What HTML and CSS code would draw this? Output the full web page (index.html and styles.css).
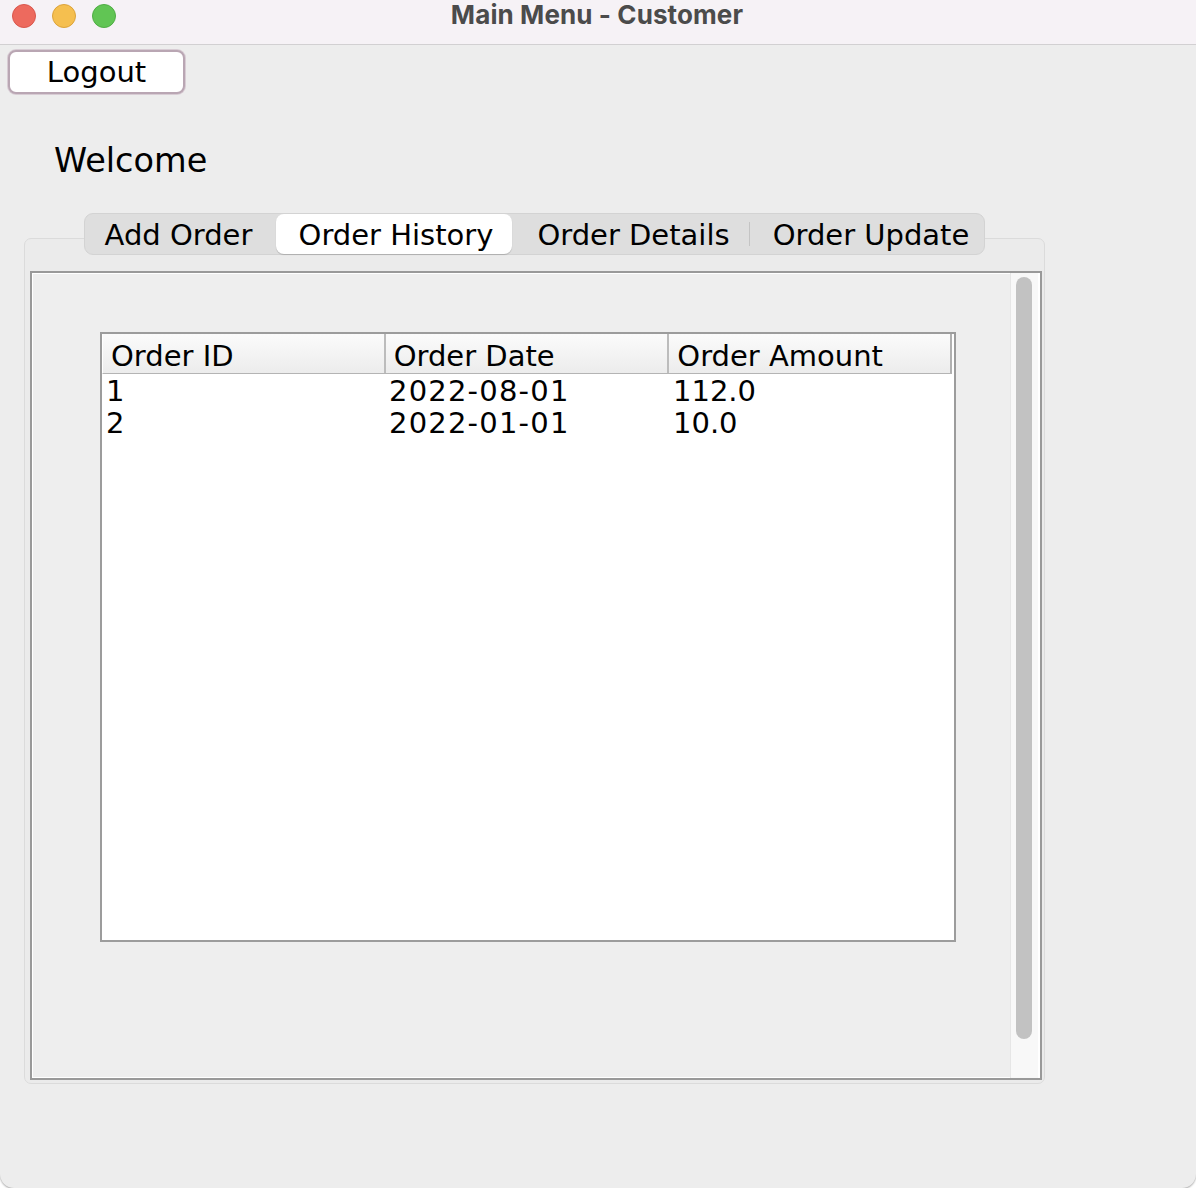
FILE: index.html
```html
<!DOCTYPE html>
<html>
<head>
<meta charset="utf-8">
<link rel="stylesheet" href="styles.css">
</head>
<body>
<div class="window">
  <div class="titlebar">
    <div class="lights">
      <span class="light red"></span>
      <span class="light yellow"></span>
      <span class="light green"></span>
    </div>
    <div class="title">Main Menu - Customer</div>
  </div>
  <div class="content">
    <button class="logout">Logout</button>
    <div class="welcome">Welcome</div>
    <div class="tabs">
      <div class="tab t1">Add Order</div>
      <div class="tab t2 active">Order History</div>
      <div class="tab t3">Order Details</div>
      <div class="sep"></div>
      <div class="tab t4">Order Update</div>
    </div>
    <div class="panel">
      <div class="scrollpane">
        <div class="viewport">
          <div class="table">
            <div class="thead">
              <div class="th c1">Order ID</div>
              <div class="th c2">Order Date</div>
              <div class="th c3">Order Amount</div>
            </div>
            <div class="rows">
              <div class="row">
                <div class="td c1">1</div>
                <div class="td c2 date">2022-08-01</div>
                <div class="td c3">112.0</div>
              </div>
              <div class="row">
                <div class="td c1">2</div>
                <div class="td c2 date">2022-01-01</div>
                <div class="td c3">10.0</div>
              </div>
            </div>
          </div>
        </div>
        <div class="scrollbar"><div class="thumb"></div></div>
      </div>
    </div>
  </div>
</div>
</body>
</html>
```
FILE: styles.css
```css
html, body {
  margin: 0;
  padding: 0;
  background: #ffffff;
}
body {
  width: 1196px;
  height: 1188px;
  overflow: hidden;
  font-family: "DejaVu Sans", "Liberation Sans", sans-serif;
}
.window {
  width: 1196px;
  height: 1188px;
  background: #ededed;
  border-radius: 0 0 14px 14px;
  box-shadow: 0 1px 2px rgba(0,0,0,0.35);
  display: flex;
  flex-direction: column;
  overflow: hidden;
}
.titlebar {
  height: 44px;
  flex: none;
  background: #f6f2f6;
  border-bottom: 1px solid #d2d0d2;
  position: relative;
  display: flex;
  align-items: center;
  justify-content: center;
}
.lights {
  position: absolute;
  left: 12px;
  top: 4px;
  display: flex;
  gap: 16px;
}
.light {
  width: 24px;
  height: 24px;
  border-radius: 50%;
  box-sizing: border-box;
}
.red { background: #ed6a5e; border: 1px solid #d9574d; }
.yellow { background: #f5bf4f; border: 1px solid #dca33a; }
.green { background: #61c554; border: 1px solid #4fad44; }
.title {
  font-family: Inter, "Open Sans", sans-serif;
  font-weight: 700;
  font-size: 26px;
  color: #4b4b4b;
  margin-top: -15px;
  margin-left: -2px;
  letter-spacing: 0.1px;
}
.content {
  flex: 1;
  display: flex;
  flex-direction: column;
  align-items: flex-start;
}
.logout {
  margin: 5px 0 0 8px;
  width: 177px;
  height: 44px;
  background: #ffffff;
  border: 2px solid #b9a6b3;
  border-radius: 8px;
  box-shadow: 0 0 0 1px #d8ccd4;
  font-family: "DejaVu Sans", sans-serif;
  font-size: 29px;
  color: #000;
  padding: 0 0 0 0;
  line-height: 38px;
}
.welcome {
  margin: 47px 0 0 54px;
  height: 40px;
  line-height: 40px;
  font-size: 33.5px;
  color: #000;
}
.tabs {
  margin: 32px 0 0 84px;
  height: 42px;
  width: 901px;
  box-sizing: border-box;
  background: #dedede;
  border: 1px solid #d3d3d3;
  border-radius: 9px;
  display: flex;
  align-items: center;
  position: relative;
  z-index: 1;
}
.tab {
  height: 40px;
  display: flex;
  align-items: center;
  justify-content: center;
  font-size: 29px;
  color: #000;
  box-sizing: border-box;
  padding-top: 2px;
}
.t1 { width: 191px; padding-right: 4px; }
.t2 { width: 236px; padding-left: 4px; }
.t3 { width: 237px; padding-left: 6px; }
.t4 { width: 234px; padding-left: 8px; }
.tab.active {
  background: #ffffff;
  border-radius: 8px;
  box-shadow: 0 1px 1px rgba(0,0,0,0.18);
  height: 40px;
}
.sep {
  width: 1px;
  height: 24px;
  background: #c4c4c4;
}
.panel {
  margin: -17px 0 0 24px;
  width: 1021px;
  height: 846px;
  box-sizing: border-box;
  background: #ebebeb;
  border: 1px solid #dbdbdb;
  border-radius: 7px;
  padding: 32px 2px 3px 5px;
}
.scrollpane {
  width: 100%;
  height: 100%;
  box-sizing: border-box;
  border: 2px solid #999999;
  box-shadow: inset 1px 1px 0 #ffffff, inset -1px -1px 0 #ffffff;
  background: #eeeeee;
  display: flex;
}
.viewport {
  flex: 1;
  padding: 59px 0 0 68px;
}
.scrollbar {
  width: 30px;
  flex: none;
  background: #f8f8f8;
  border-left: 1px solid #e6e6e6;
  box-sizing: border-box;
  padding: 4px 0 0 5px;
  border-right: 2px solid #ffffff;
}
.thumb {
  width: 16px;
  height: 762px;
  background: #c2c2c2;
  border-radius: 8px;
}
.table {
  width: 856px;
  height: 610px;
  box-sizing: border-box;
  border: 2px solid #9c9c9c;
  background: #ffffff;
}
.thead {
  display: flex;
  width: 850px;
  height: 40px;
  box-sizing: border-box;
  background: linear-gradient(#fbfbfb, #ececec);
  border-bottom: 1px solid #b4b4b4;
  border-right: 2px solid #b0b0b0;
  border-left: 1px solid #ffffff;
}
.th {
  height: 39px;
  box-sizing: border-box;
  font-size: 29px;
  line-height: 39px;
  padding-left: 8px;
  color: #000;
  border-right: 2px solid #bcbcbc;
  padding-top: 3px;
}
.th.c1 { width: 283px; }
.th.c2 { width: 284px; }
.th.c3 { width: 281px; border-right: none; }
.rows {
  padding-top: 1px;
}
.row {
  display: flex;
  height: 32px;
}
.td {
  font-size: 29px;
  line-height: 32px;
  color: #000;
  padding-left: 4px;
  box-sizing: border-box;
}
.td.c1 { width: 283px; }
.td.c2 { width: 284px; }
.td.c3 { width: 283px; }
.td.date { letter-spacing: 1.2px; }
```
